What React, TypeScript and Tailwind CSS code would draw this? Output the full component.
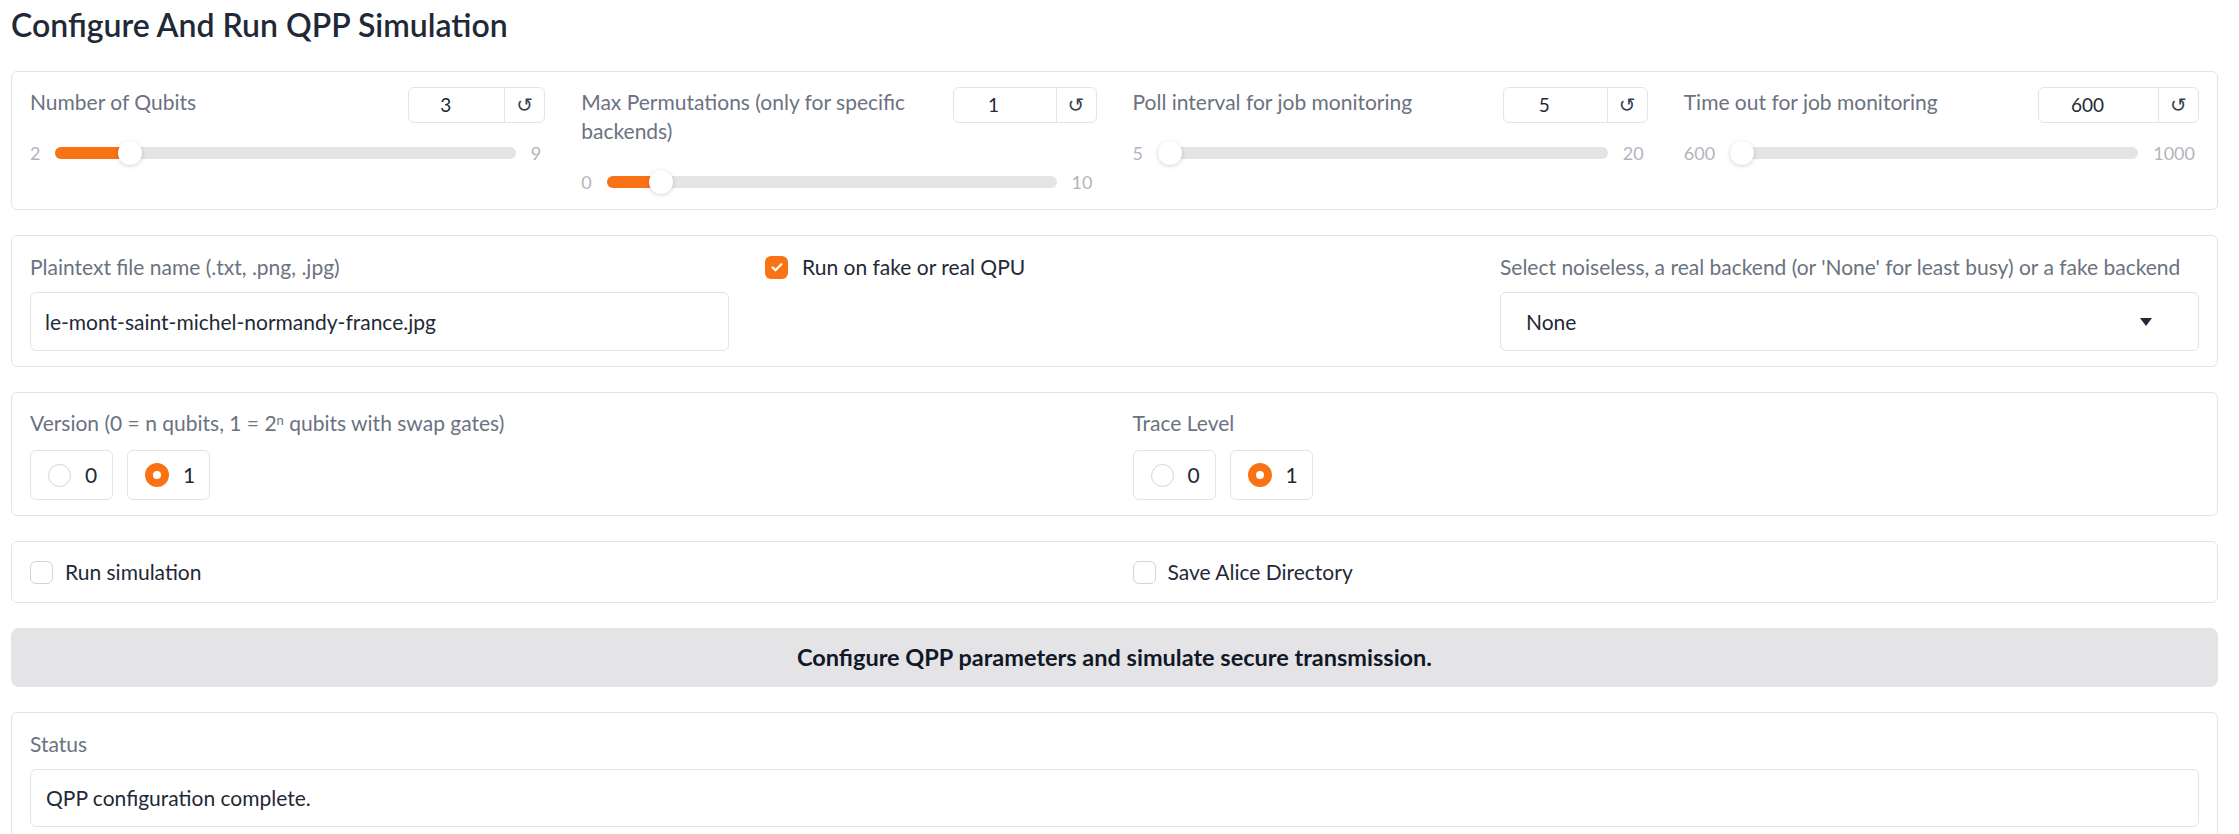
import { Fragment } from 'react';

type SliderDef = {
  label: string;
  value: string;
  min: number;
  max: number;
  v: number;
  inputW: string;
};

const sliders: SliderDef[] = [
  { label: 'Number of Qubits', value: '3', min: 2, max: 9, v: 3, inputW: 'w-[95px]' },
  { label: 'Max Permutations (only for specific backends)', value: '1', min: 0, max: 10, v: 1, inputW: 'w-[102px]' },
  { label: 'Poll interval for job monitoring', value: '5', min: 5, max: 20, v: 5, inputW: 'w-[103px]' },
  { label: 'Time out for job monitoring', value: '600', min: 600, max: 1000, v: 600, inputW: 'w-[119px]' },
];

function Slider({ s }: { s: SliderDef }) {
  const frac = (s.v - s.min) / (s.max - s.min);
  // thumb is inset by its radius at both ends
  const left = `calc(12px + (100% - 24px) * ${frac})`;
  return (
    <div>
      <div className="flex items-start justify-between gap-[16px]">
        <label className="pb-[7px] text-[21px] leading-[29px] text-[#6b7280]">{s.label}</label>
        <div className="flex h-[36px] shrink-0 rounded-md border border-[#e4e4e7] bg-white">
          <div className={`${s.inputW} flex items-center justify-center pr-[22px] text-[19px] text-[#1f2937]`}>{s.value}</div>
          <div className="flex w-[40px] items-center justify-center border-l border-[#e4e4e7] font-['DejaVu_Sans',sans-serif] text-[20px] text-[#374151]">
            ↺
          </div>
        </div>
      </div>
      <div className="mt-[18px] flex h-[24px] items-center gap-[15px] pr-[4px] text-[18px] text-[#b4b4bc]">
        <span>{s.min}</span>
        <div className="relative h-[12px] flex-1 rounded-full bg-[#e4e4e7]">
          <div className="absolute inset-y-0 left-0 rounded-full bg-[#f97316]" style={{ width: left }} />
          <div
            className="absolute top-1/2 h-[24px] w-[24px] -translate-x-1/2 -translate-y-1/2 rounded-full bg-white shadow-[0_1px_4px_rgba(0,0,0,0.18)]"
            style={{ left }}
          />
        </div>
        <span>{s.max}</span>
      </div>
    </div>
  );
}

function Checkbox({ checked }: { checked?: boolean }) {
  if (checked) {
    return (
      <span className="flex h-[23px] w-[23px] shrink-0 items-center justify-center rounded-[6px] bg-[#f97316]">
        <svg width="14" height="14" viewBox="0 0 16 16" fill="none">
          <path d="M3 8.5l3.2 3.2L13 4.8" stroke="white" strokeWidth="2.6" strokeLinecap="round" strokeLinejoin="round" />
        </svg>
      </span>
    );
  }
  return <span className="h-[23px] w-[23px] shrink-0 rounded-[6px] border border-[#d4d4d8] bg-white" />;
}

function RadioGroup({ selected }: { selected: string }) {
  return (
    <div className="mt-[13px] flex gap-[14px]">
      {['0', '1'].map((o) => (
        <div key={o} className="flex h-[50px] w-[83px] items-center gap-[14px] rounded-md border border-[#e4e4e7] pl-[17px]">
          {o === selected ? (
            <span className="h-[24px] w-[24px] rounded-full border-[8px] border-[#f97316] bg-white" />
          ) : (
            <span className="h-[23px] w-[23px] rounded-full border border-[#d4d4d8] bg-white" />
          )}
          <span className="text-[21px] text-[#1f2937]">{o}</span>
        </div>
      ))}
    </div>
  );
}

export default function App() {
  return (
    <div className="min-h-screen bg-white pl-[11px] pr-[21px] pt-[6px] font-['Lato',sans-serif]">
      <h1 className="mb-[28px] text-[32px] font-semibold leading-[37px] text-[#1f2937]">Configure And Run QPP Simulation</h1>

      <div className="flex flex-col gap-[25px]">
        {/* sliders */}
        <div className="grid grid-cols-4 gap-x-[36px] rounded-md border border-[#e4e4e7] px-[18px] pb-[15px] pt-[15px]">
          {sliders.map((s) => (
            <Slider key={s.label} s={s} />
          ))}
        </div>

        {/* file + backend */}
        <div className="grid grid-cols-3 gap-x-[36px] rounded-md border border-[#e4e4e7] px-[18px] pb-[15px] pt-[17px]">
          <div>
            <label className="block text-[21px] leading-[28px] text-[#6b7280]">Plaintext file name (.txt, .png, .jpg)</label>
            <div className="mt-[11px] flex h-[59px] items-center rounded-md border border-[#e4e4e7] px-[14px] text-[21px] text-[#1f2937]">
              le-mont-saint-michel-normandy-france.jpg
            </div>
          </div>
          <div>
            <div className="flex h-[28px] items-center gap-[14px]">
              <Checkbox checked />
              <span className="text-[21px] text-[#1f2937]">Run on fake or real QPU</span>
            </div>
          </div>
          <div>
            <label className="block text-[21px] leading-[28px] text-[#6b7280]">
              Select noiseless, a real backend (or 'None' for least busy) or a fake backend
            </label>
            <div className="mt-[11px] flex h-[59px] items-center justify-between rounded-md border border-[#e4e4e7] pl-[25px] pr-[46px] text-[21px] text-[#1f2937]">
              <span>None</span>
              <svg width="12" height="8" viewBox="0 0 12 8">
                <polygon points="0,0 12,0 6,8" fill="#1f2937" />
              </svg>
            </div>
          </div>
        </div>

        {/* version / trace */}
        <div className="grid grid-cols-2 gap-x-[36px] rounded-md border border-[#e4e4e7] px-[18px] pb-[15px] pt-[16px]">
          <div>
            <label className="block text-[21px] leading-[28px] text-[#6b7280]">
              Version (0 = n qubits, 1 = 2<sup className="text-[13px]">n</sup> qubits with swap gates)
            </label>
            <RadioGroup selected="1" />
          </div>
          <div>
            <label className="block text-[21px] leading-[28px] text-[#6b7280]">Trace Level</label>
            <RadioGroup selected="1" />
          </div>
        </div>

        {/* run flags */}
        <div className="grid grid-cols-2 gap-x-[36px] rounded-md border border-[#e4e4e7] px-[18px] py-[17px]">
          {['Run simulation', 'Save Alice Directory'].map((t) => (
            <Fragment key={t}>
              <div className="flex h-[26px] items-center gap-[12px]">
                <Checkbox />
                <span className="text-[21px] text-[#1f2937]">{t}</span>
              </div>
            </Fragment>
          ))}
        </div>

        <button className="flex h-[59px] items-center justify-center rounded-lg bg-[#e4e4e7] text-[23.5px] font-bold text-[#111827]">
          Configure QPP parameters and simulate secure transmission.
        </button>

        {/* status */}
        <div className="rounded-md border border-[#e4e4e7] px-[18px] pb-[15px] pt-[17px]">
          <label className="block text-[21px] leading-[28px] text-[#6b7280]">Status</label>
          <div className="mt-[11px] flex h-[58px] items-center rounded-md border border-[#e4e4e7] px-[15px] text-[21px] text-[#1f2937]">
            QPP configuration complete.
          </div>
        </div>
      </div>
    </div>
  );
}
